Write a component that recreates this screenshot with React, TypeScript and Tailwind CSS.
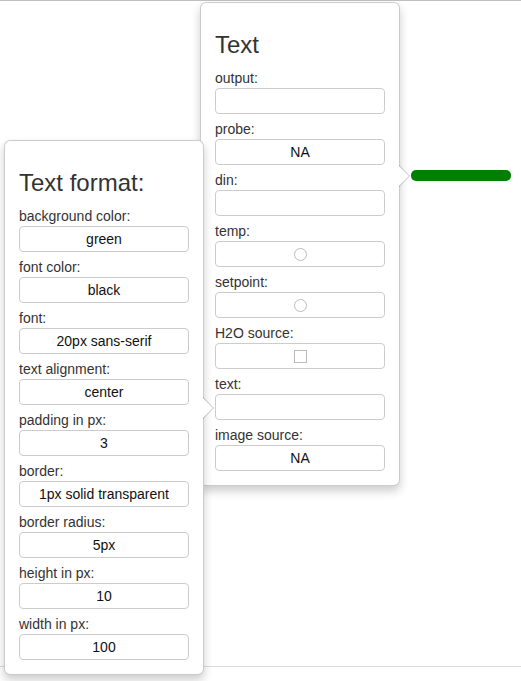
import type { ReactNode } from "react";

type Field = {
  label: string;
  value?: string;
  kind?: "text" | "radio" | "check";
};

const textFields: Field[] = [
  { label: "output:" },
  { label: "probe:", value: "NA" },
  { label: "din:" },
  { label: "temp:", kind: "radio" },
  { label: "setpoint:", kind: "radio" },
  { label: "H2O source:", kind: "check" },
  { label: "text:" },
  { label: "image source:", value: "NA" },
];

const formatFields: Field[] = [
  { label: "background color:", value: "green" },
  { label: "font color:", value: "black" },
  { label: "font:", value: "20px sans-serif" },
  { label: "text alignment:", value: "center" },
  { label: "padding in px:", value: "3" },
  { label: "border:", value: "1px solid transparent" },
  { label: "border radius:", value: "5px" },
  { label: "height in px:", value: "10" },
  { label: "width in px:", value: "100" },
];

function FieldBox({ field }: { field: Field }) {
  return (
    <div className="flex h-[26px] items-center justify-center rounded-[4px] border border-[#ccc] bg-white text-[14px] text-[#111]">
      {field.kind === "radio" && (
        <span className="size-[13px] rounded-full border border-[#bbb]" />
      )}
      {field.kind === "check" && (
        <span className="size-[13px] border border-[#bbb]" />
      )}
      {!field.kind && field.value}
    </div>
  );
}

function Popover({
  title,
  fields,
  className,
  arrowClass,
}: {
  title: ReactNode;
  fields: Field[];
  className: string;
  arrowClass: string;
}) {
  return (
    <div
      className={`absolute w-[200px] rounded-[6px] border border-[rgba(0,0,0,0.2)] bg-white px-[14px] pt-[9px] pb-[14px] shadow-[0_5px_10px_rgba(0,0,0,0.2)] ${className}`}
    >
      {/* arrow pointing right */}
      <div
        className={`absolute right-[-11px] h-0 w-0 border-y-[11px] border-r-0 border-l-[11px] border-y-transparent border-l-[rgba(0,0,0,0.25)] ${arrowClass}`}
      >
        <div className="absolute top-[-10px] right-[1px] h-0 w-0 border-y-[10px] border-r-0 border-l-[10px] border-y-transparent border-l-white" />
      </div>

      <h3 className="mt-[20px] mb-[10px] text-[24px] leading-[26.4px] text-[#333]">
        {title}
      </h3>
      <div className="flex flex-col gap-[5px]">
        {fields.map((f) => (
          <div key={f.label}>
            <div className="h-5 text-[14px] leading-5 text-[#333]">
              {f.label}
            </div>
            <FieldBox field={f} />
          </div>
        ))}
      </div>
    </div>
  );
}

export default function App() {
  return (
    <div
      className="relative h-[681px] w-[521px] overflow-hidden bg-white"
      style={{ fontFamily: '"Liberation Sans", Arial, sans-serif' }}
    >
      <div className="h-[667px] border-t border-b border-t-[#c0c0c0] border-b-[#dcdcdc]" />

      {/* node on the canvas */}
      <div className="absolute top-[170px] left-[411px] h-[11px] w-[100px] rounded-[5px] bg-[#008000]" />

      <Popover
        title="Text"
        fields={textFields}
        className="top-[2px] left-[200px]"
        arrowClass="top-[162px]"
      />
      <Popover
        title="Text format:"
        fields={formatFields}
        className="top-[140px] left-[4px]"
        arrowClass="top-1/2 -mt-[11px]"
      />
    </div>
  );
}
